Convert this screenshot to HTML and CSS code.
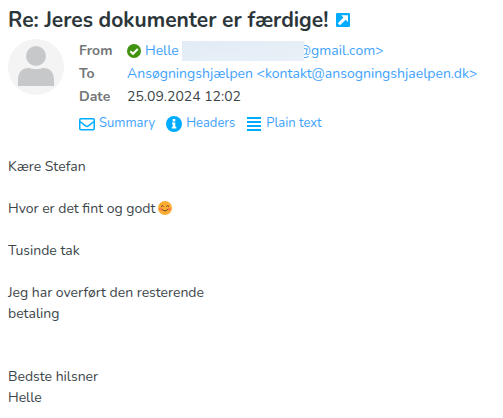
FILE: index.html
```html
<!DOCTYPE html>
<html lang="da">
<head>
<meta charset="utf-8">
<meta name="viewport" content="width=device-width, initial-scale=1">
<title>Re: Jeres dokumenter er færdige!</title>
<link rel="stylesheet" href="styles.css">
</head>
<body>
<main class="message">
  <h1 class="subject">Re: Jeres dokumenter er færdige!
    <a class="open-link" href="#open" aria-label="Open in new window"><svg class="open-icon" viewBox="0 0 14 14"><rect width="14" height="14" rx="1.2" fill="#00acff"/><path d="M5.200 2.200H12V9L9.700 6.700 3.900 12.300 1.800 10.200 7.500 4.500z" fill="#fff"/></svg></a>
  </h1>
  <header class="header">
    <svg class="avatar" viewBox="0 0 56 56" aria-hidden="true"><circle cx="28" cy="28" r="28" fill="#f4f4f4"/><circle cx="28" cy="17" r="10" fill="#c7c8ca"/><path d="M10 47v-6C10 33.500 14 29 20.500 29c2.500 0 4 1.300 7.500 1.300S33 29 35.500 29C42 29 46 33.500 46 41v6z" fill="#c7c8ca"/></svg>
    <div class="details">
      <table class="fields">
        <tr>
          <th scope="row">From</th>
          <td><div class="sender"><svg class="check" viewBox="0 0 14 14" aria-hidden="true"><circle cx="7" cy="7" r="7" fill="#41920e"/><path d="M3.300 7.200 6 9.800l4.800-4.800" fill="none" stroke="#fff" stroke-width="2"/></svg><a href="#from">Helle</a><span class="redacted"></span><a class="domain" href="#from">@gmail.com&gt;</a></div></td>
        </tr>
        <tr>
          <th scope="row">To</th>
          <td><a href="#to">Ansøgningshjælpen &lt;kontakt@ansogningshjaelpen.dk&gt;</a></td>
        </tr>
        <tr>
          <th scope="row">Date</th>
          <td>25.09.2024 12:02</td>
        </tr>
      </table>
      <nav class="views">
        <a href="#summary"><svg class="view-icon" viewBox="0 0 16 16" aria-hidden="true"><g fill="none" stroke="#00acff" stroke-width="1.500"><rect x=".75" y="2.750" width="14.500" height="11" rx="1.200"/><path d="m1 5.500 5.600 4.400q1.400 1 2.800 0L15 5.500"/></g></svg>Summary</a>
        <a href="#headers"><svg class="view-icon" viewBox="0 0 16 16" aria-hidden="true"><circle cx="8" cy="8" r="8" fill="#00acff"/><path d="M6.700 3h2.600v2.400H6.700zM6 6.500h3.300v4.200h1v1.800H5.800v-1.800h1V8.200H6z" fill="#fff"/></svg>Headers</a>
        <a href="#plain"><svg class="view-icon" viewBox="0 0 16 16" aria-hidden="true"><path d="M1 1h14v2H1zM1 5h14v2H1zM1 9h14v2H1zM1 13h14v2H1z" fill="#00acff"/></svg>Plain text</a>
      </nav>
    </div>
  </header>
  <article class="body">
    <p>Kære Stefan</p>
    <p>Hvor er det fint og godt<svg class="emoji" viewBox="0 0 14 14" role="img" aria-label="Smile"><circle cx="7" cy="7" r="7" fill="#fbad32"/><circle cx="2.700" cy="8" r="1.600" fill="#ff7b4b"/><circle cx="11.300" cy="8" r="1.600" fill="#ff7b4b"/><path d="M3.200 5.300q1.100-1.700 2.200 0M8.600 5.300q1.100-1.700 2.200 0M4.200 8.600q2.800 2.800 5.600 0" fill="none" stroke="#66412b" stroke-width="1" stroke-linecap="round"/></svg></p>
    <p>Tusinde tak</p>
    <p>Jeg har overført den resterende<br>betaling</p>
    <p class="signature">Bedste hilsner<br>Helle</p>
  </article>
</main>
</body>
</html>
```
FILE: styles.css
```css
body {
  margin: 0;
  background: #fff;
  color: #3c4549;
  font-family: Nunito, Lato, "Open Sans", sans-serif;
  font-size: 14px;
  line-height: 21px;
}

a {
  color: #3ea2fb;
  text-decoration: none;
}

.message {
  padding: 6px 8px;
}

.subject {
  display: flex;
  align-items: center;
  gap: 8px;
  margin: 0;
  color: #2c363a;
  font-size: 21px;
  line-height: 28px;
  font-weight: 700;
}

.open-link {
  display: flex;
}

.open-icon {
  width: 14px;
  height: 14px;
}

.header {
  display: flex;
  gap: 15px;
  padding-top: 5px;
}

.avatar {
  flex: none;
  width: 56px;
  height: 56px;
}

.fields {
  border-collapse: collapse;
  white-space: nowrap;
}

.fields th,
.fields td {
  height: 23px;
  padding: 0;
  text-align: left;
}

.fields th {
  min-width: 48px;
  color: #737677;
  font-weight: 700;
}

.sender {
  display: flex;
  align-items: center;
}

.check {
  width: 14px;
  height: 14px;
  margin-right: 4px;
}

.redacted {
  z-index: 1;
  width: 122px;
  height: 20px;
  margin-left: 3px;
  background: linear-gradient(170deg, #e2ecf5, #e9f0f7);
}

.domain {
  margin-left: -6px;
}

.views {
  display: flex;
  gap: 11px;
  padding-top: 5px;
  font-size: 13px;
}

.views a {
  display: flex;
  align-items: center;
  gap: 4px;
}

.view-icon {
  width: 16px;
  height: 16px;
}

.body {
  padding-top: 22px;
}

.body p {
  margin: 0 0 21px;
}

.body .signature {
  margin: 42px 0 0;
}

.emoji {
  width: 14px;
  height: 14px;
  margin-left: 3px;
  vertical-align: -2px;
}
```
